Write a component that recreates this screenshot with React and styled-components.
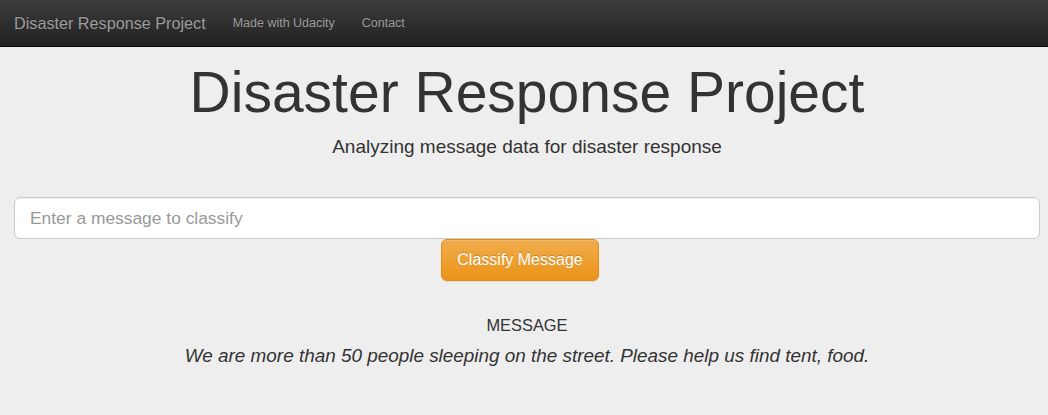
import styled, { createGlobalStyle } from "styled-components";

const Global = createGlobalStyle`
  html, body {
    margin: 0;
    padding: 0;
    background: #eeeeee;
    font-family: "Liberation Sans", Arial, Helvetica, sans-serif;
    color: #333333;
  }
  * { box-sizing: border-box; }
`;

export default function App() {
  return (
    <>
      <Global />
      <Navbar>
        <Brand href="#">Disaster Response Project</Brand>
        <NavLink href="#">Made with Udacity</NavLink>
        <NavLink href="#">Contact</NavLink>
      </Navbar>

      <Jumbotron>
        <Title>Disaster Response Project</Title>
        <Lead>Analyzing message data for disaster response</Lead>

        <Form onSubmit={(e) => e.preventDefault()}>
          <Input type="text" placeholder="Enter a message to classify" />
          <Submit type="submit">Classify Message</Submit>
        </Form>
      </Jumbotron>

      <Result>
        <Caption>MESSAGE</Caption>
        <Quote>We are more than 50 people sleeping on the street. Please help us find tent, food.</Quote>
      </Result>
    </>
  );
}

// ─── Styled components ───

const Navbar = styled.nav`
  display: flex;
  align-items: center;
  height: 47px;
  padding: 0 0 0 14px;
  background-image: linear-gradient(to bottom, #3c3c3c 0%, #222222 100%);
  border-bottom: 1px solid #080808;
`;

const Brand = styled.a`
  font-size: 16.2px;
  color: #9d9d9d;
  text-decoration: none;
  margin-right: 27px;
  text-shadow: 0 -1px 0 rgba(0, 0, 0, 0.25);
`;

const NavLink = styled.a`
  font-size: 12.5px;
  color: #9d9d9d;
  text-decoration: none;
  margin-right: 27px;
  text-shadow: 0 -1px 0 rgba(0, 0, 0, 0.25);
`;

const Jumbotron = styled.header`
  display: flex;
  flex-direction: column;
  align-items: center;
  padding: 0 8px 0 14px;
`;

const Title = styled.h1`
  margin: 14px 0 0;
  font-size: 57px;
  font-weight: 400;
  line-height: 1.1;
  color: #333333;
`;

const Lead = styled.p`
  margin: 10px 0 0;
  font-size: 19px;
  font-weight: 400;
  line-height: 1.4;
  color: #333333;
`;

const Form = styled.form`
  display: flex;
  flex-direction: column;
  align-items: center;
  width: 100%;
  margin-top: 37px;
`;

const Input = styled.input`
  width: 100%;
  height: 42px;
  padding: 0 15px;
  font-family: inherit;
  font-size: 17.4px;
  color: #555555;
  background: #ffffff;
  border: 1px solid #cccccc;
  border-radius: 6px;
  box-shadow: inset 0 1px 1px rgba(0, 0, 0, 0.075);

  &::placeholder {
    color: #999999;
  }
`;

const Submit = styled.button`
  height: 42px;
  margin-right: 14px;
  padding: 0 15px;
  font-family: inherit;
  font-size: 16px;
  color: #ffffff;
  background-image: linear-gradient(to bottom, #f0ad4e 0%, #eb9316 100%);
  border: 1px solid #e38d13;
  border-radius: 6px;
  text-shadow: 0 -1px 0 rgba(0, 0, 0, 0.2);
  box-shadow: inset 0 1px 0 rgba(255, 255, 255, 0.15), 0 1px 1px rgba(0, 0, 0, 0.075);
  cursor: pointer;
`;

const Result = styled.section`
  display: flex;
  flex-direction: column;
  align-items: center;
  padding: 35px 8px 0 14px;
`;

const Caption = styled.h4`
  margin: 0;
  font-size: 16.4px;
  font-weight: 400;
  line-height: 1.1;
  color: #333333;
`;

const Quote = styled.p`
  margin: 9px 0 0;
  font-size: 18.9px;
  font-style: italic;
  line-height: 1.4;
  color: #333333;
`;
